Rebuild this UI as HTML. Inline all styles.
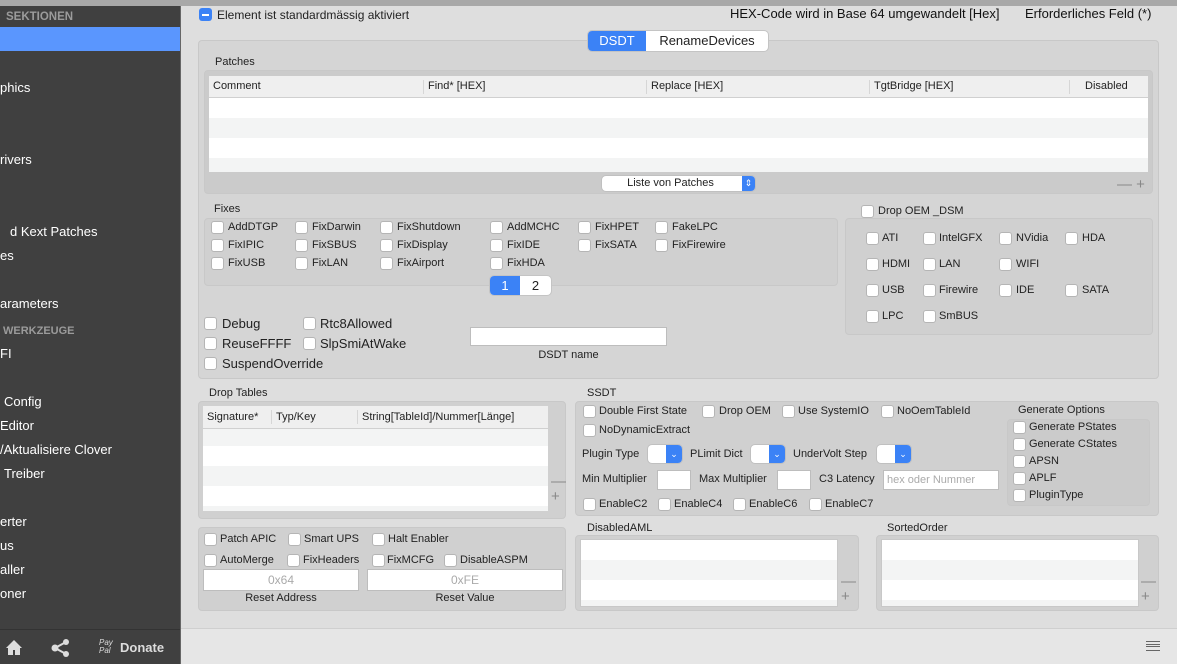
<!DOCTYPE html><html><head><meta charset="utf-8"><style>
*{box-sizing:border-box;margin:0;padding:0}
body{width:1177px;height:664px;overflow:hidden;background:#dedede;font-family:"Liberation Sans",sans-serif;font-size:12px;color:#222;position:relative}
.a{position:absolute;white-space:nowrap}
.cb{position:absolute;width:13px;height:13px;background:#fff;border:1px solid #b5b5b5;border-radius:3px}
.t{position:absolute;white-space:nowrap;line-height:14px}
.box{position:absolute;background:#d0d0d0;border:1px solid #c8c8c8;border-radius:4px}
.sb{position:absolute;color:#fff;font-size:13px;white-space:nowrap;left:0}
.rows{background:repeating-linear-gradient(#fff 0 20px,#f3f4f4 20px 40px)}
.inp{position:absolute;background:#fff;border:1px solid #bdbdbd}
.pop{position:absolute;background:#fff;border-radius:4px;box-shadow:0 0 0 1px #c0c0c0;overflow:hidden}
.pop i{position:absolute;right:0;top:0;bottom:0;width:16px;background:#3b82f6;color:#fff;font-style:normal;font-size:9px;text-align:center;line-height:18px}
</style></head><body>
<!-- sidebar -->
<div class="a" style="left:0;top:0;width:1177px;height:6px;background:#a8a8a8"></div>
<div class="a" style="left:0;top:6px;width:180px;height:658px;background:#404040"></div>
<div class="a" style="left:180px;top:6px;width:1px;height:658px;background:#666"></div>
<div class="sb" style="top:11px;left:6px;color:#9b9b9b;font-size:11.5px;font-weight:bold">SEKTIONEN</div>
<div class="a" style="left:0;top:27px;width:180px;height:24px;background:#5a96fe"></div>
<div class="sb" style="top:80px">phics</div>
<div class="sb" style="top:152px">rivers</div>
<div class="sb" style="top:224px;left:10px">d Kext Patches</div>
<div class="sb" style="top:248px">es</div>
<div class="sb" style="top:296px">arameters</div>
<div class="sb" style="top:325px;left:3px;color:#9b9b9b;font-size:11px;font-weight:bold">WERKZEUGE</div>
<div class="sb" style="top:346px">FI</div>
<div class="sb" style="top:394px;left:4px">Config</div>
<div class="sb" style="top:418px">Editor</div>
<div class="sb" style="top:442px">/Aktualisiere Clover</div>
<div class="sb" style="top:466px;left:4px">Treiber</div>
<div class="sb" style="top:514px">erter</div>
<div class="sb" style="top:538px">us</div>
<div class="sb" style="top:562px">aller</div>
<div class="sb" style="top:586px">oner</div>
<div class="a" style="left:0;top:629px;width:180px;height:1px;background:#333"></div>
<svg class="a" style="left:5px;top:639px" width="18" height="18" viewBox="0 0 18 18"><path d="M9 1L1 9h2v7h5v-5h2v5h5V9h2z" fill="#ddd"/></svg>
<svg class="a" style="left:51px;top:639px" width="20" height="18" viewBox="0 0 20 18"><circle cx="15" cy="3" r="3" fill="#ddd"/><circle cx="4" cy="9" r="3.5" fill="#ddd"/><circle cx="15" cy="15" r="3" fill="#ddd"/><path d="M4 9L15 3M4 9l11 6" stroke="#ddd" stroke-width="2"/></svg>
<div class="a" style="left:99px;top:639px;color:#ddd;font-size:8px;font-style:italic;line-height:8px">Pay<br>Pal</div>
<div class="a" style="left:120px;top:640px;color:#ddd;font-size:13px;font-weight:bold">Donate</div>
<!-- top -->
<div class="a" style="left:199px;top:8px;width:13px;height:13px;background:#3b82f6;border-radius:3px"><div style="position:absolute;left:3px;top:5.5px;width:7px;height:2px;background:#fff"></div></div>
<div class="t" style="left:217px;top:8px">Element ist standardmässig aktiviert</div>
<div class="t" style="left:730px;top:7px;font-size:13px;color:#111">HEX-Code wird in Base 64 umgewandelt [Hex]</div>
<div class="t" style="left:1025px;top:7px;font-size:13px;color:#111">Erforderliches Feld (*)</div>
<!-- big panel -->
<div class="box" style="left:198px;top:40px;width:961px;height:339px;background:#d5d5d5"></div>
<div class="a" style="left:588px;top:31px;width:180px;height:20px;background:#fff;border-radius:4px;box-shadow:0 0 0 1px #c4c4c4;font-size:13px"><div class="a" style="left:0;top:0;width:58px;height:20px;background:#3b82f6;color:#fff;border-radius:4px 0 0 4px;text-align:center;line-height:20px">DSDT</div><div class="a" style="left:58px;top:0;width:122px;text-align:center;line-height:20px">RenameDevices</div></div>
<div class="t" style="left:215px;top:55px;font-size:11px">Patches</div>
<div class="box" style="left:204px;top:70px;width:949px;height:124px;background:#cbcbcb"></div>
<div class="a rows" style="left:209px;top:76px;width:939px;height:96px;padding-top:22px;background-position:0 22px"></div>
<div class="a" style="left:209px;top:76px;width:939px;height:22px;background:#efefef;border-bottom:1px solid #d0d0d0;font-size:11px;line-height:21px">
<span class="a" style="left:4px">Comment</span><span class="a" style="left:219px">Find* [HEX]</span><span class="a" style="left:442px">Replace [HEX]</span><span class="a" style="left:665px">TgtBridge [HEX]</span><span class="a" style="left:876px">Disabled</span>
<span class="a" style="left:214px;top:4px;width:1px;height:14px;background:#d6d6d6"></span><span class="a" style="left:437px;top:4px;width:1px;height:14px;background:#d6d6d6"></span><span class="a" style="left:660px;top:4px;width:1px;height:14px;background:#d6d6d6"></span><span class="a" style="left:860px;top:4px;width:1px;height:14px;background:#d6d6d6"></span></div>
<div class="pop" style="left:602px;top:176px;width:153px;height:15px;font-size:11px;line-height:15px;text-align:center"><span style="margin-right:16px">Liste von Patches</span><i style="width:13px;line-height:15px">⇕</i></div>
<div class="a" style="left:1117px;top:176px;color:#888;font-size:15px">—&nbsp;+</div>
<!-- Fixes -->
<div class="t" style="left:214px;top:202px;font-size:11px">Fixes</div>
<div class="box" style="left:204px;top:218px;width:634px;height:68px"></div>
<div class="cb" style="left:211px;top:221px"></div><div class="t" style="left:228px;top:220px;font-size:11px">AddDTGP</div>
<div class="cb" style="left:295px;top:221px"></div><div class="t" style="left:312px;top:220px;font-size:11px">FixDarwin</div>
<div class="cb" style="left:380px;top:221px"></div><div class="t" style="left:397px;top:220px;font-size:11px">FixShutdown</div>
<div class="cb" style="left:490px;top:221px"></div><div class="t" style="left:507px;top:220px;font-size:11px">AddMCHC</div>
<div class="cb" style="left:578px;top:221px"></div><div class="t" style="left:595px;top:220px;font-size:11px">FixHPET</div>
<div class="cb" style="left:655px;top:221px"></div><div class="t" style="left:672px;top:220px;font-size:11px">FakeLPC</div>
<div class="cb" style="left:211px;top:239px"></div><div class="t" style="left:228px;top:238px;font-size:11px">FixIPIC</div>
<div class="cb" style="left:295px;top:239px"></div><div class="t" style="left:312px;top:238px;font-size:11px">FixSBUS</div>
<div class="cb" style="left:380px;top:239px"></div><div class="t" style="left:397px;top:238px;font-size:11px">FixDisplay</div>
<div class="cb" style="left:490px;top:239px"></div><div class="t" style="left:507px;top:238px;font-size:11px">FixIDE</div>
<div class="cb" style="left:578px;top:239px"></div><div class="t" style="left:595px;top:238px;font-size:11px">FixSATA</div>
<div class="cb" style="left:655px;top:239px"></div><div class="t" style="left:672px;top:238px;font-size:11px">FixFirewire</div>
<div class="cb" style="left:211px;top:257px"></div><div class="t" style="left:228px;top:256px;font-size:11px">FixUSB</div>
<div class="cb" style="left:295px;top:257px"></div><div class="t" style="left:312px;top:256px;font-size:11px">FixLAN</div>
<div class="cb" style="left:380px;top:257px"></div><div class="t" style="left:397px;top:256px;font-size:11px">FixAirport</div>
<div class="cb" style="left:490px;top:257px"></div><div class="t" style="left:507px;top:256px;font-size:11px">FixHDA</div>
<div class="a" style="left:490px;top:276px;width:61px;height:19px;background:#fff;border-radius:4px;box-shadow:0 0 0 1px #c4c4c4;font-size:13px;line-height:19px"><div class="a" style="left:0;width:30px;height:19px;background:#3b82f6;color:#fff;text-align:center;border-radius:4px 0 0 4px">1</div><div class="a" style="left:30px;width:31px;text-align:center">2</div></div>
<!-- Drop OEM -->
<div class="cb" style="left:861px;top:205px"></div><div class="t" style="left:878px;top:204px;font-size:11px">Drop OEM _DSM</div>
<div class="box" style="left:845px;top:218px;width:308px;height:117px"></div>
<div class="cb" style="left:866px;top:232px"></div><div class="t" style="left:882px;top:231px;font-size:11px">ATI</div>
<div class="cb" style="left:923px;top:232px"></div><div class="t" style="left:939px;top:231px;font-size:11px">IntelGFX</div>
<div class="cb" style="left:999px;top:232px"></div><div class="t" style="left:1016px;top:231px;font-size:11px">NVidia</div>
<div class="cb" style="left:1065px;top:232px"></div><div class="t" style="left:1082px;top:231px;font-size:11px">HDA</div>
<div class="cb" style="left:866px;top:258px"></div><div class="t" style="left:882px;top:257px;font-size:11px">HDMI</div>
<div class="cb" style="left:923px;top:258px"></div><div class="t" style="left:939px;top:257px;font-size:11px">LAN</div>
<div class="cb" style="left:999px;top:258px"></div><div class="t" style="left:1016px;top:257px;font-size:11px">WIFI</div>
<div class="cb" style="left:866px;top:284px"></div><div class="t" style="left:882px;top:283px;font-size:11px">USB</div>
<div class="cb" style="left:923px;top:284px"></div><div class="t" style="left:939px;top:283px;font-size:11px">Firewire</div>
<div class="cb" style="left:999px;top:284px"></div><div class="t" style="left:1016px;top:283px;font-size:11px">IDE</div>
<div class="cb" style="left:1065px;top:284px"></div><div class="t" style="left:1082px;top:283px;font-size:11px">SATA</div>
<div class="cb" style="left:866px;top:310px"></div><div class="t" style="left:882px;top:309px;font-size:11px">LPC</div>
<div class="cb" style="left:923px;top:310px"></div><div class="t" style="left:939px;top:309px;font-size:11px">SmBUS</div>
<!-- debug -->
<div class="cb" style="left:204px;top:317px"></div><div class="t" style="left:222px;top:317px;font-size:13px">Debug</div>
<div class="cb" style="left:303px;top:317px"></div><div class="t" style="left:320px;top:317px;font-size:13px">Rtc8Allowed</div>
<div class="cb" style="left:204px;top:337px"></div><div class="t" style="left:222px;top:337px;font-size:13px">ReuseFFFF</div>
<div class="cb" style="left:303px;top:337px"></div><div class="t" style="left:320px;top:337px;font-size:13px">SlpSmiAtWake</div>
<div class="cb" style="left:204px;top:357px"></div><div class="t" style="left:222px;top:357px;font-size:13px">SuspendOverride</div>
<div class="inp" style="left:470px;top:327px;width:197px;height:19px"></div>
<div class="t" style="left:470px;top:348px;width:197px;text-align:center;font-size:11px">DSDT name</div>
<!-- drop tables -->
<div class="t" style="left:209px;top:386px;font-size:11px">Drop Tables</div>
<div class="box" style="left:198px;top:401px;width:368px;height:118px"></div>
<div class="a rows" style="left:203px;top:406px;width:345px;height:105px;padding-top:23px"></div>
<div class="a" style="left:203px;top:406px;width:345px;height:23px;background:#efefef;border-bottom:1px solid #d0d0d0;font-size:11px;line-height:22px"><span class="a" style="left:4px">Signature*</span><span class="a" style="left:73px">Typ/Key</span><span class="a" style="left:159px">String[TableId]/Nummer[Länge]</span><span class="a" style="left:68px;top:4px;width:1px;height:14px;background:#d6d6d6"></span><span class="a" style="left:154px;top:4px;width:1px;height:14px;background:#d6d6d6"></span></div>
<div class="a" style="left:551px;top:474px;color:#888;font-size:15px;line-height:15px">—<br>+</div>
<!-- ssdt -->
<div class="t" style="left:587px;top:386px;font-size:11px">SSDT</div>
<div class="box" style="left:575px;top:401px;width:584px;height:115px"></div>
<div class="cb" style="left:583px;top:405px"></div><div class="t" style="left:599px;top:404px;font-size:11px">Double First State</div>
<div class="cb" style="left:702px;top:405px"></div><div class="t" style="left:719px;top:404px;font-size:11px">Drop OEM</div>
<div class="cb" style="left:782px;top:405px"></div><div class="t" style="left:798px;top:404px;font-size:11px">Use SystemIO</div>
<div class="cb" style="left:881px;top:405px"></div><div class="t" style="left:897px;top:404px;font-size:11px">NoOemTableId</div>
<div class="cb" style="left:583px;top:424px"></div><div class="t" style="left:599px;top:423px;font-size:11px">NoDynamicExtract</div>
<div class="t" style="left:582px;top:447px;font-size:11px">Plugin Type</div><div class="pop" style="left:648px;top:445px;width:34px;height:18px"><i>⌄</i></div>
<div class="t" style="left:690px;top:447px;font-size:11px">PLimit Dict</div><div class="pop" style="left:751px;top:445px;width:34px;height:18px"><i>⌄</i></div>
<div class="t" style="left:793px;top:447px;font-size:11px">UnderVolt Step</div><div class="pop" style="left:877px;top:445px;width:34px;height:18px"><i>⌄</i></div>
<div class="t" style="left:582px;top:472px;font-size:11px">Min Multiplier</div><div class="inp" style="left:657px;top:470px;width:34px;height:20px"></div>
<div class="t" style="left:699px;top:472px;font-size:11px">Max Multiplier</div><div class="inp" style="left:777px;top:470px;width:34px;height:20px"></div>
<div class="t" style="left:819px;top:472px;font-size:11px">C3 Latency</div><div class="inp" style="left:883px;top:470px;width:116px;height:20px;color:#aaa;font-size:11px;line-height:18px;padding-left:3px">hex oder Nummer</div>
<div class="cb" style="left:583px;top:498px"></div><div class="t" style="left:599px;top:497px;font-size:11px">EnableC2</div>
<div class="cb" style="left:658px;top:498px"></div><div class="t" style="left:674px;top:497px;font-size:11px">EnableC4</div>
<div class="cb" style="left:733px;top:498px"></div><div class="t" style="left:749px;top:497px;font-size:11px">EnableC6</div>
<div class="cb" style="left:809px;top:498px"></div><div class="t" style="left:825px;top:497px;font-size:11px">EnableC7</div>
<div class="t" style="left:1018px;top:403px;font-size:11px">Generate Options</div>
<div class="box" style="left:1007px;top:419px;width:143px;height:87px;background:#cbcbcb"></div>
<div class="cb" style="left:1013px;top:421px"></div><div class="t" style="left:1029px;top:420px;font-size:11px">Generate PStates</div>
<div class="cb" style="left:1013px;top:438px"></div><div class="t" style="left:1029px;top:437px;font-size:11px">Generate CStates</div>
<div class="cb" style="left:1013px;top:455px"></div><div class="t" style="left:1029px;top:454px;font-size:11px">APSN</div>
<div class="cb" style="left:1013px;top:472px"></div><div class="t" style="left:1029px;top:471px;font-size:11px">APLF</div>
<div class="cb" style="left:1013px;top:489px"></div><div class="t" style="left:1029px;top:488px;font-size:11px">PluginType</div>
<!-- bottom left -->
<div class="box" style="left:198px;top:527px;width:368px;height:84px"></div>
<div class="cb" style="left:204px;top:533px"></div><div class="t" style="left:220px;top:532px;font-size:11px">Patch APIC</div>
<div class="cb" style="left:288px;top:533px"></div><div class="t" style="left:304px;top:532px;font-size:11px">Smart UPS</div>
<div class="cb" style="left:372px;top:533px"></div><div class="t" style="left:388px;top:532px;font-size:11px">Halt Enabler</div>
<div class="cb" style="left:204px;top:554px"></div><div class="t" style="left:220px;top:553px;font-size:11px">AutoMerge</div>
<div class="cb" style="left:287px;top:554px"></div><div class="t" style="left:303px;top:553px;font-size:11px">FixHeaders</div>
<div class="cb" style="left:372px;top:554px"></div><div class="t" style="left:387px;top:553px;font-size:11px">FixMCFG</div>
<div class="cb" style="left:444px;top:554px"></div><div class="t" style="left:460px;top:553px;font-size:11px">DisableASPM</div>
<div class="inp" style="left:203px;top:569px;width:156px;height:22px;color:#aaa;text-align:center;line-height:21px">0x64</div>
<div class="inp" style="left:367px;top:569px;width:196px;height:22px;color:#aaa;text-align:center;line-height:21px">0xFE</div>
<div class="t" style="left:203px;top:591px;width:156px;text-align:center;font-size:11px">Reset Address</div>
<div class="t" style="left:367px;top:591px;width:196px;text-align:center;font-size:11px">Reset Value</div>
<!-- lists -->
<div class="t" style="left:587px;top:521px;font-size:11px">DisabledAML</div>
<div class="box" style="left:575px;top:535px;width:284px;height:76px"></div>
<div class="a rows" style="left:580px;top:539px;width:258px;height:68px;border:1px solid #c8c8c8"></div>
<div class="a" style="left:841px;top:574px;color:#888;font-size:15px;line-height:15px">—<br>+</div>
<div class="t" style="left:887px;top:521px;font-size:11px">SortedOrder</div>
<div class="box" style="left:876px;top:535px;width:283px;height:76px"></div>
<div class="a rows" style="left:881px;top:539px;width:258px;height:68px;border:1px solid #c8c8c8"></div>
<div class="a" style="left:1141px;top:574px;color:#888;font-size:15px;line-height:15px">—<br>+</div>
<!-- bottom bar -->
<div class="a" style="left:181px;top:628px;width:996px;height:36px;background:#e6e6e6;border-top:1px solid #cfcfcf"></div>
<div class="a" style="left:1146px;top:641px;width:14px;height:10px;border-top:1px solid #666;border-bottom:1px solid #666"><div style="margin-top:2px;height:3px;border-top:1px solid #666;border-bottom:1px solid #666"></div></div>
</body></html>
